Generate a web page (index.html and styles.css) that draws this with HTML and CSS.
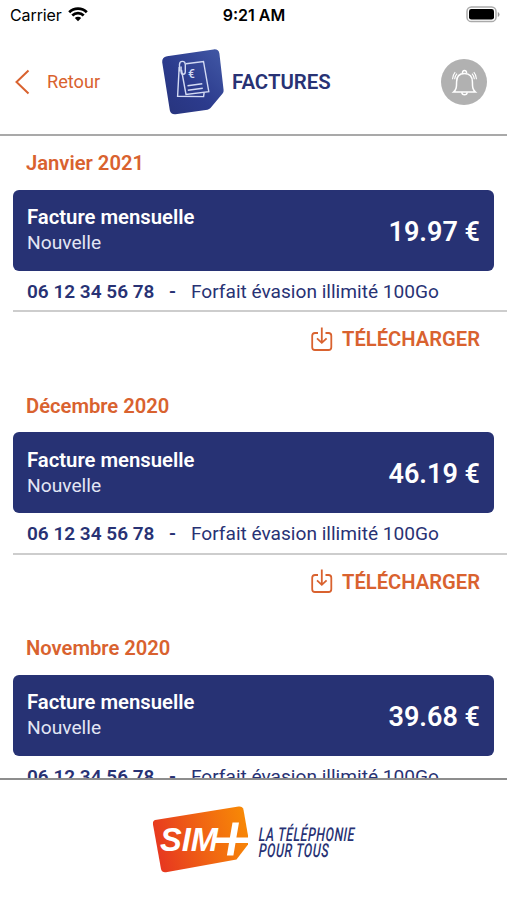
FILE: index.html
```html
<!DOCTYPE html>
<html lang="fr">
  <head>
    <meta charset="utf-8" />
    <title>Factures</title>
    <link rel="stylesheet" href="styles.css">
  </head>
  <body>
    <div class="status-bar">
      <div class="carrier">
        <span>Carrier</span>
        <svg width="20" height="15" viewBox="0 0 20 15">
          <path d="M1.2 5.3a12.4 12.4 0 0 1 17.6 0M4.3 8.5a8 8 0 0 1 11.4 0" fill="none" stroke="#000" stroke-width="2.7" />
          <path d="M10 14.3l-3.2-3.2a4.5 4.5 0 0 1 6.4 0z" />
        </svg>
      </div>
      <div class="clock">9:21 AM</div>
      <div class="battery">
        <svg width="34" height="17" viewBox="0 0 34 17">
          <rect x="1" y="1" width="29" height="14.6" rx="4.4" fill="#fff" stroke="#aaa" stroke-width="1.5" />
          <rect x="3" y="3" width="25" height="10.6" rx="2.4" />
          <path d="M31.8 6v5q1.7-.8 1.7-2.5T31.8 6z" fill="#999" />
        </svg>
      </div>
    </div>

    <header class="header">
      <a class="back">
        <svg width="15" height="26" viewBox="0 0 15 26">
          <path d="M13.5 1.5L1.5 13l12 11.5" fill="none" stroke="#d9622f" stroke-width="2" />
        </svg>
        <span>Retour</span>
      </a>
      <div class="title">
        <svg width="64" height="68" viewBox="0 0 64 68">
          <defs>
            <linearGradient id="blue" x1="0" y1="1" x2="1" y2="0">
              <stop offset="0" stop-color="#27347c" />
              <stop offset="0.45" stop-color="#2c3b8d" />
              <stop offset="1" stop-color="#4259a6" />
            </linearGradient>
          </defs>
          <path d="M6 8.3L52.5 1.4q5-.6 5.9 4.1L62.6 42q.2 2-1 3.6L49.5 60q-1.3 1.4-3 1.700L14.500 66.300q-4.800.4-5.700-4L1.200 14.200q-.4-5 4.800-5.900z" fill="url(#blue)" />
          <g fill="none" stroke="#d3daf3" stroke-width="1.4">
            <path d="M25 15.8l17.500-2.300 5.300 30.200-22.800 2.800L20.500 22" />
            <path d="M18.200 19l-1.600 29.200 26 .4.5-4" />
            <path d="M18.500 23.500v-7c0-4.200 5.800-4.200 5.800 0v7.300c0 3.300-4.200 3.300-4.200 0v-5.300" />
            <path d="M26.500 37.700l14.800-1.900M26.800 42.200l15-1.900" />
          </g>
          <text class="icon-euro" x="27" y="30">€</text>
        </svg>
        <h1>FACTURES</h1>
      </div>
      <a class="bell">
        <svg width="46" height="46" viewBox="0 0 46 46" fill="none" stroke="#fff" stroke-width="1.5">
          <path d="M12.500 33h22c-2.700-2.400-3.100-4.200-3.100-10.300 0-5-2.500-8.300-7.900-8.300s-7.900 3.300-7.900 8.300c0 6.100-.4 7.900-3.100 10.300z" />
          <path d="M21.600 14.300c-1.100-3.700 4.900-3.700 3.800 0M20.800 33.300c.2 3.400 5.200 3.400 5.400 0" />
          <path d="M16 14.600c-1.400 1.500-2.200 3.200-2.400 5.600M31 14.600c1.400 1.500 2.200 3.200 2.400 5.600M14.200 13.200c-1.700 1.900-2.500 4-2.700 7M32.800 13.200c1.700 1.900 2.500 4 2.700 7" stroke-width="1.1" />
        </svg>
      </a>
    </header>

    <main class="invoices">
      <section class="invoice">
        <h2>Janvier 2021</h2>
        <div class="card">
          <div>
            <div class="card-title">Facture mensuelle</div>
            <div class="card-status">Nouvelle</div>
          </div>
          <div class="amount">19.97 €</div>
        </div>
        <div class="line">
          <span class="phone">06 12 34 56 78</span>
          <span class="dash">-</span>
          <span class="plan">Forfait évasion illimité 100Go</span>
        </div>
        <a class="download">
          <svg width="22" height="25" viewBox="0 0 22 25">
            <path d="M7 6H4Q1.2 6 1.2 8.8v11.4Q1.2 23 4 23h13.5q2.8 0 2.8-2.8V8.8Q20.3 6 17.5 6h-3M10.8.5v15M6 11.3l4.8 4.5 4.8-4.5" />
          </svg>
          <span>TÉLÉCHARGER</span>
        </a>
      </section>

      <section class="invoice">
        <h2>Décembre 2020</h2>
        <div class="card">
          <div>
            <div class="card-title">Facture mensuelle</div>
            <div class="card-status">Nouvelle</div>
          </div>
          <div class="amount">46.19 €</div>
        </div>
        <div class="line">
          <span class="phone">06 12 34 56 78</span>
          <span class="dash">-</span>
          <span class="plan">Forfait évasion illimité 100Go</span>
        </div>
        <a class="download">
          <svg width="22" height="25" viewBox="0 0 22 25">
            <path d="M7 6H4Q1.2 6 1.2 8.8v11.4Q1.2 23 4 23h13.5q2.8 0 2.8-2.8V8.8Q20.3 6 17.5 6h-3M10.8.5v15M6 11.3l4.8 4.5 4.8-4.5" />
          </svg>
          <span>TÉLÉCHARGER</span>
        </a>
      </section>

      <section class="invoice">
        <h2>Novembre 2020</h2>
        <div class="card">
          <div>
            <div class="card-title">Facture mensuelle</div>
            <div class="card-status">Nouvelle</div>
          </div>
          <div class="amount">39.68 €</div>
        </div>
        <div class="line">
          <span class="phone">06 12 34 56 78</span>
          <span class="dash">-</span>
          <span class="plan">Forfait évasion illimité 100Go</span>
        </div>
      </section>
    </main>

    <footer class="footer">
      <svg width="206" height="70" viewBox="0 0 206 70">
        <defs>
          <linearGradient id="orange" x1="0" y1="0.4" x2="1" y2="0.2">
            <stop offset="0" stop-color="#e7391f" />
            <stop offset="0.5" stop-color="#f06413" />
            <stop offset="1" stop-color="#f88a05" />
          </linearGradient>
        </defs>
        <path d="M4.2 14L87.5.6q4-.6 5 3.200L97 29.500v9L85.500 53.500 15 66.200q-4 .6-5-3.200L2 18.500q-.5-3.800 2.200-4.500z" fill="url(#orange)" />
        <text class="logo-text" x="9" y="44.5" textLength="58" lengthAdjust="spacingAndGlyphs">SIM</text>
        <path d="M81.500 16.500h6.500l-2.600 15H98l-1 5.500H84.500l-2.100 12.500H75.900l2.100-12.500H62l1-5.500h15.900z" fill="#fff" />
        <text class="slogan" transform="translate(107.5 34.5) scale(0.66 1) skewX(-4)" textLength="145">LA TÉLÉPHONIE</text>
        <text class="slogan" transform="translate(107.5 51) scale(0.66 1) skewX(-4)" textLength="106">POUR TOUS</text>
      </svg>
    </footer>
  </body>
</html>
```
FILE: styles.css
```css
* {
  box-sizing: border-box;
}

body {
  margin: 0;
  height: 900px;
  display: flex;
  flex-direction: column;
  overflow: hidden;
  background-color: white;
  font-family: Roboto, sans-serif;
  color: #283274;
}

h1,
h2 {
  margin: 0;
  font-weight: 600;
}

svg {
  display: block;
  flex: none;
}

.status-bar {
  display: grid;
  grid-template-columns: 1fr auto 1fr;
  align-items: center;
  height: 30px;
  padding: 0 7px 1px 10px;
  font-family: Inter, sans-serif;
  font-size: 16px;
  color: black;
}

.carrier {
  display: flex;
  align-items: center;
  gap: 6px;
  letter-spacing: -0.1px;
}

.clock {
  padding-right: 2px;
  font-weight: 600;
}

.battery {
  display: flex;
  justify-content: flex-end;
}

.header {
  display: flex;
  align-items: center;
  height: 106px;
  padding: 0 20px 1px 15px;
  border-bottom: 2px solid #a9a9a9;
}

.back {
  display: flex;
  align-items: center;
  gap: 17px;
  width: 146px;
  color: #d9622f;
  font-size: 18.2px;
}

.title {
  display: flex;
  align-items: center;
  gap: 7px;
}

.title h1 {
  font-size: 20.4px;
}

.icon-euro {
  font-size: 12px;
  font-weight: 500;
  fill: #d3daf3;
}

.bell {
  margin-left: auto;
  border-radius: 50%;
  background-color: #b1b1b1;
}

.invoices {
  flex: 1;
  min-height: 0;
  overflow: hidden;
}

.invoice {
  height: 242.7px;
}

.invoice h2 {
  height: 53.5px;
  padding-left: 26px;
  line-height: 54px;
  font-size: 20.2px;
  color: #d9622f;
}

.card {
  display: flex;
  align-items: center;
  justify-content: space-between;
  height: 81px;
  margin: 0 13px;
  padding: 0 14px;
  border-radius: 6px;
  background-color: #273274;
  color: white;
  line-height: 26px;
}

.card-title {
  font-size: 20.3px;
  font-weight: 600;
}

.card-status {
  font-size: 19.2px;
  color: #e3e6f5;
}

.amount {
  padding-top: 3px;
  font-size: 27px;
  font-weight: 600;
}

.line {
  display: flex;
  height: 41.5px;
  margin-left: 13px;
  padding-left: 14px;
  border-bottom: 2px solid #cdcdcd;
  line-height: 42px;
  font-size: 19.1px;
  white-space: nowrap;
}

.phone,
.dash {
  font-weight: 600;
}

.phone {
  width: 127px;
  font-size: 19px;
}

.dash {
  width: 37px;
  padding-left: 15px;
}

.download {
  display: flex;
  align-items: center;
  justify-content: flex-end;
  gap: 9px;
  height: 54px;
  padding-right: 27px;
  color: #d9622f;
  font-size: 20.2px;
  font-weight: 600;
}

.download path {
  fill: none;
  stroke: #d9622f;
  stroke-width: 1.8;
}

.footer {
  display: flex;
  justify-content: center;
  height: 122px;
  padding-top: 26px;
  border-top: 2px solid #8d8d8d;
}

.logo-text {
  font-family: "Liberation Sans", sans-serif;
  font-size: 33px;
  font-style: italic;
  font-weight: 700;
  fill: white;
}

.slogan {
  font-size: 19px;
  font-style: italic;
  font-weight: 500;
  fill: #283274;
}
```
